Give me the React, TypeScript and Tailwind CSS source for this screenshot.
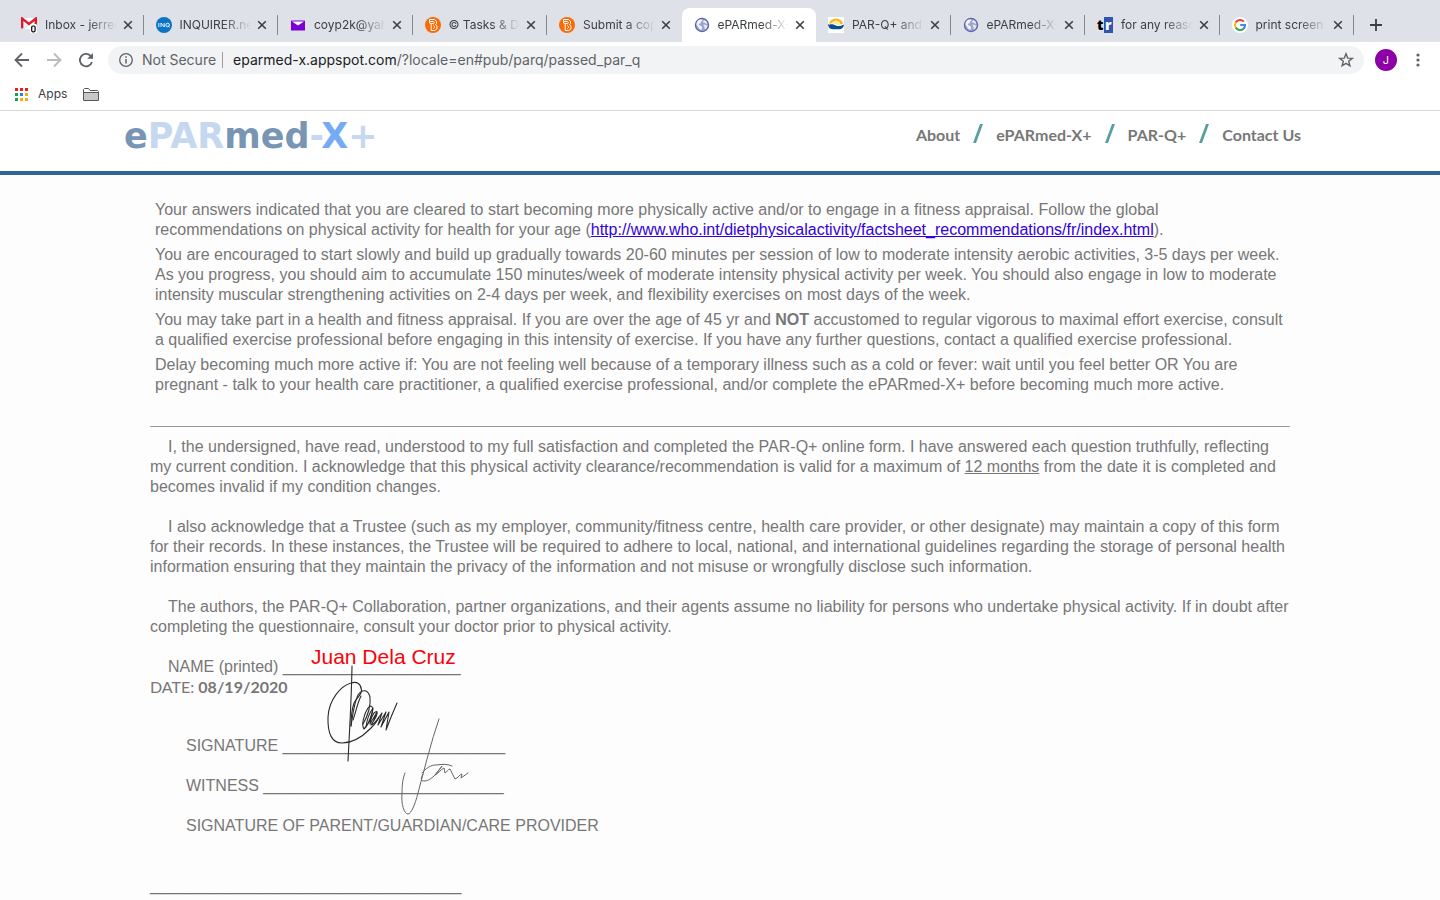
import React from "react";

function Gmail() {
  return (
    <svg viewBox="0 0 16 16" className="size-4 shrink-0" aria-hidden="true">
      <path d="M0 1h16v11H0z" fill="#fff" />
      <path d="M3 11.500l5-4.500 5 4.500" fill="none" stroke="#ccc" strokeWidth="1" />
      <path d="M1.200 11.500V1.600L8 7l6.800-5.400v9.900" fill="none" stroke="#e2192c" strokeWidth="2.400" />
      <rect x="9" y="7" width="7" height="9" rx="1.500" fill="#fff" />
      <rect x="10.700" y="9" width="3.400" height="5.800" rx="1.200" fill="#fff" stroke="#000" strokeWidth="1.200" />
    </svg>
  );
}

function Inquirer() {
  return (
    <svg viewBox="0 0 16 16" className="size-4 shrink-0" aria-hidden="true">
      <circle cx="8" cy="8" r="8" fill="#0b74c4" />
      <path d="M2.800 6v4M5 10V6l3.200 4V6" fill="none" stroke="#fff" strokeWidth="0.900" />
      <circle cx="11.600" cy="8" r="1.800" fill="none" stroke="#fff" strokeWidth="0.900" />
      <path d="M11.800 8.500l1.700 1.700" stroke="#fff" strokeWidth="0.900" />
    </svg>
  );
}

function Yahoo() {
  return (
    <svg viewBox="0 0 16 16" className="size-4 shrink-0" aria-hidden="true">
      <rect x="1" y="3.500" width="14" height="10" rx="0.500" fill="#7b00d4" />
      <path d="M2 4.500h12L8 8.500z" fill="#fff" />
    </svg>
  );
}

function Brainly() {
  return (
    <svg viewBox="0 0 16 16" className="size-4 shrink-0" aria-hidden="true">
      <circle cx="8" cy="8" r="8" fill="#f96b07" />
      <path
        d="M4.500 2.500h5l2 1.700v2.300l-1 1.300 1.500 1.400v2.600l-2.200 1.700H6.200V6.500h2.300M4.500 2.500v2h4l.7.700v1l-.900.800M8.200 8.500l1.300 1v1.200l-.8.800H8.200M4.500 4.500v1.500l1.700.5"
        fill="none"
        stroke="#fff"
        strokeWidth="1"
      />
    </svg>
  );
}

function Globe() {
  return (
    <svg viewBox="0 0 16 16" className="size-4 shrink-0" aria-hidden="true">
      <circle cx="8" cy="8" r="6.600" fill="#9aa5cf" stroke="#5d60aa" strokeWidth="1.200" />
      <path d="M3 5l1.500-2 2.700-.700 1.300 1.200-1.800 1.200.200 1.500-1.700.300-.4 1.500 2.500 1 .900 1.600-.900 2.400-2.300-1.500-1.200-2.300-1.300-1.700z" fill="#f2f5fc" />
      <path d="M10 3.200l2.200 1 1 2.300-1.200.3-1-1.300-1.400.3-.500-1.300z" fill="#f2f5fc" />
      <path d="M9.500 7.500l2.200.2 1.900 1-.800 2.200-1.600 1.700-.900-2.300z" fill="#dfe5f5" />
    </svg>
  );
}

function Sunrise() {
  return (
    <svg viewBox="0 0 16 16" className="size-4 shrink-0" aria-hidden="true">
      <rect width="16" height="16" fill="#fff" />
      <path d="M1 7.500a7 6 0 0 1 14 0z" fill="#fbb414" />
      <path d="M3.500 7.500a4.500 4 0 0 1 9 0z" fill="#fde9a0" />
      <path d="M0 7.500c3-1.400 5-.600 8 .900 3 1 5 .500 8-.900-.300 3-2 4.800-5 4.800H5C2 12.300.3 10.500 0 7.500z" fill="#07508e" />
      <path d="M1 7.300c2.500-1.200 4.500-.500 7 .500 2.500.8 4.500.600 7-.500" fill="none" stroke="#fff" strokeWidth="1" />
    </svg>
  );
}

function Tr() {
  return (
    <span aria-hidden="true" className="flex h-4 w-4 shrink-0 items-center font-['Open_Sans',sans-serif] text-sm leading-4 font-extrabold">
      <span className="w-[7px] text-black">t</span>
      <span className="h-4 w-[9px] bg-[#2f55b0] pl-px text-white">r</span>
    </span>
  );
}

function Google() {
  return (
    <svg viewBox="0 0 16 16" className="size-4 shrink-0" aria-hidden="true">
      <circle cx="8" cy="8" r="8" fill="#fff" />
      <g fill="none" strokeWidth="2.100">
        <path d="M11.800 4.600A5 5 0 0 0 3.700 5.600" stroke="#ea4335" />
        <path d="M3.700 5.500a5 5 0 0 0 0 5" stroke="#fbbc05" />
        <path d="M3.700 10.400a5 5 0 0 0 7.800 1.300" stroke="#34a853" />
        <path d="M11.300 11.900A5 5 0 0 0 13 8H8.200" stroke="#4285f4" />
      </g>
    </svg>
  );
}

function Close() {
  return (
    <svg viewBox="0 0 10 10" className="size-[10px]" aria-hidden="true">
      <path d="M1.200 1.200l7.600 7.600M8.800 1.200L1.200 8.800" stroke="#3c4043" strokeWidth="1.600" />
    </svg>
  );
}

type TabInfo = { title: string; icon: () => React.JSX.Element; active?: boolean; divider?: boolean };

const tabs: TabInfo[] = [
  { title: "Inbox - jerreco", icon: Gmail, divider: true },
  { title: "INQUIRER.net", icon: Inquirer, divider: true },
  { title: "coyp2k@yahoo", icon: Yahoo, divider: true },
  { title: "© Tasks & Do", icon: Brainly, divider: true },
  { title: "Submit a copy", icon: Brainly },
  { title: "ePARmed-X+", icon: Globe, active: true },
  { title: "PAR-Q+ and", icon: Sunrise, divider: true },
  { title: "ePARmed-X+", icon: Globe, divider: true },
  { title: "for any reaso", icon: Tr, divider: true },
  { title: "print screen o", icon: Google, divider: true },
];

function Tab({ title, icon: Icon, active, divider }: TabInfo) {
  return (
    <div className={active ? "relative flex min-w-0 flex-1 items-center rounded-t-lg bg-white pr-[11px] pl-3" : "relative flex min-w-0 flex-1 items-center pr-[11px] pl-3"}>
      <button type="button" className="flex min-w-0 flex-1 items-center gap-2 text-left">
        <Icon />
        <span className="block min-w-0 flex-1 overflow-hidden text-xs leading-4 whitespace-nowrap text-[#3c4043] [mask-image:linear-gradient(to_right,#000_60%,transparent)]">
          {title}
        </span>
      </button>
      <button type="button" aria-label={"Close " + title} className="ml-[6px] shrink-0">
        <Close />
      </button>
      {divider && <span className="absolute top-[7px] right-0 h-5 w-px bg-[#85888d]" />}
    </div>
  );
}

function BrowserChrome() {
  return (
    <header className="border-b border-[#d9dadc] bg-white font-[Inter,sans-serif]">
      <div className="flex bg-[#dee1e7] pt-2 pl-[9px]">
        <div className="flex h-[34px] min-w-0 flex-1">
          {tabs.map((t, i) => (
            <Tab key={i} {...t} />
          ))}
        </div>
        <div className="flex w-[86px] items-center pl-[15px]">
          <button type="button" aria-label="New tab">
            <svg viewBox="0 0 14 14" className="size-[14px]" aria-hidden="true">
              <path d="M7 1v12M1 7h12" stroke="#3c4043" strokeWidth="1.800" />
            </svg>
          </button>
        </div>
      </div>
      <div className="flex h-9 items-center pr-[14px] pl-3">
        <div className="flex w-24 items-center gap-3">
          <button type="button" aria-label="Back">
            <svg viewBox="0 0 20 20" className="size-5" fill="none" stroke="#5f6368" strokeWidth="1.800" aria-hidden="true">
              <path d="M17 10H4M10 3.500L3.500 10l6.500 6.500" />
            </svg>
          </button>
          <button type="button" aria-label="Forward">
            <svg viewBox="0 0 20 20" className="size-5" fill="none" stroke="#babcbe" strokeWidth="1.800" aria-hidden="true">
              <path d="M3 10h13M10 3.500l6.500 6.500-6.500 6.500" />
            </svg>
          </button>
          <button type="button" aria-label="Reload">
            <svg viewBox="0 0 20 20" className="size-5" fill="none" stroke="#5f6368" strokeWidth="1.800" aria-hidden="true">
              <path d="M16 12A6.200 6.200 0 1 1 14.600 5.800L16 7.200" />
              <path d="M17 3v5.800h-5.800z" fill="#5f6368" stroke="none" />
            </svg>
          </button>
        </div>
        <div className="flex h-7 min-w-0 flex-1 items-center rounded-full bg-[#f1f3f4] px-[10px] text-sm text-[#5f6368]">
          <svg viewBox="0 0 16 16" className="size-4 shrink-0" aria-hidden="true">
            <circle cx="8" cy="8" r="6.300" fill="none" stroke="#5f6368" strokeWidth="1.300" />
            <path d="M8 7v4.500M8 4.300v1.500" stroke="#5f6368" strokeWidth="1.500" />
          </svg>
          <span className="ml-2 shrink-0">Not Secure</span>
          <span className="mr-[10px] ml-[6px] h-4 w-px bg-[#9b9ea2]" />
          <span className="flex-1 whitespace-nowrap">
            <span className="text-[#202124]">eparmed-x.appspot.com</span>/?locale=en#pub/parq/passed_par_q
          </span>
          <button type="button" aria-label="Bookmark this page">
            <svg viewBox="0 0 16 16" className="size-4" fill="none" stroke="#5f6368" strokeWidth="1.400" aria-hidden="true">
              <path d="M8 1.800l1.700 4.300 4.600.3-3.600 2.900 1.200 4.500L8 11.300l-3.900 2.500 1.200-4.500L1.700 6.400l4.600-.300z" />
            </svg>
          </button>
        </div>
        <button type="button" aria-label="Profile" className="ml-[11px] flex size-[22px] items-center justify-center rounded-full bg-[#8c00a5] text-[11px] text-white">
          J
        </button>
        <button type="button" aria-label="Menu" className="ml-[13px]">
          <svg viewBox="0 0 16 16" className="size-4" fill="#5f6368" aria-hidden="true">
            <circle cx="8" cy="3" r="1.600" />
            <circle cx="8" cy="8" r="1.600" />
            <circle cx="8" cy="13" r="1.600" />
          </svg>
        </button>
      </div>
      <div className="flex h-8 items-center gap-4 pl-[15px] text-xs text-[#3c4043]">
        <button type="button" className="flex items-center gap-[10px]">
          <svg viewBox="0 0 13 13" className="size-[13px]" aria-hidden="true">
            <path d="M0 0h3v3H0zM5 0h3v3H5zM10 0h3v3h-3z" fill="#ee1c1c" />
            <path d="M0 5h3v3H0zM0 10h3v3H0z" fill="#14a54b" />
            <path d="M5 5h3v3H5z" fill="#1a83f5" />
            <path d="M10 5h3v3h-3zM5 10h3v3H5zM10 10h3v3h-3z" fill="#fbab0c" />
          </svg>
          Apps
        </button>
        <button type="button" aria-label="Bookmark folder">
          <svg viewBox="0 0 16 13" className="h-[13px] w-4" aria-hidden="true">
            <path d="M.5 11.500v-10l1-1h4l1.500 2h7.500l1 1v8l-1 1h-13z" fill="#fff" stroke="#55585c" />
            <path d="M1 4.500h14v7.500H1z" fill="#c8c8c8" />
            <path d="M.5 4.500h15M.5 4v8.500h15V4" fill="none" stroke="#55585c" />
          </svg>
        </button>
      </div>
    </header>
  );
}

const links = ["About", "ePARmed-X+", "PAR-Q+", "Contact Us"];

function SiteHeader() {
  return (
    <div className="flex h-16 items-start justify-between border-b-4 border-[#2f6794] bg-white pr-[139px] pl-[124px]">
      <a href="#home" className="mt-[7px] font-['DejaVu_Sans',sans-serif] text-[35px] leading-9 font-bold text-[#c5d8f0]">
        <span className="text-[#7895b4]">e</span>PAR<span className="text-[#7895b4]">med</span>-<span className="text-[#75abf6]">X</span>+
      </a>
      <nav className="mt-3 flex items-center font-[Lato,sans-serif] text-base leading-6 font-bold text-[#777]">
        {links.map((l, i) => (
          <React.Fragment key={l}>
            {i > 0 && (
              <svg viewBox="0 0 10 19" className="mr-[13px] mb-1 ml-[13px] h-[19px] w-[10px]" aria-hidden="true">
                <path d="M0 19L7 0h3L3 19z" fill="#5b9ea0" />
              </svg>
            )}
            <a href={"#" + l}>{l}</a>
          </React.Fragment>
        ))}
      </nav>
    </div>
  );
}

function Signatures() {
  return (
    <svg viewBox="0 0 150 160" className="pointer-events-none absolute top-0 left-[170px] h-[160px] w-[150px]" fill="none" strokeLinecap="round" strokeLinejoin="round" aria-hidden="true">
      <g stroke="#2a2a2a" strokeWidth="1.100">
        <path d="M32 9C31.500 42 29.500 74 28 104" />
        <path d="M31 69c0-10 1-17 3-23 3-6 8-8 7.500-13C41 27 37 24 31 26 21 29 9 42 8 60c-.5 17 4 26 14 26 10 0 20-6 28-14 5-5 8-9 9-12" />
        <path d="M31 69c2-13 3-23 7-31 4-6 10-6 12 2 1 8-2 19-7 27" />
        <path d="M33 63c3-8 4-16 8-24" />
        <path d="M44 72c-3-4 0-15 4-21 3-4 6-1 4 5-2 7-5 13-8 16 4-3 7-11 10-16 3-3 4-1 2 4l-5 8c4-1 7-7 11-12l-4 12 8-13-5 15 8-15-3 18c3-8 7-18 11-27" />
        <path d="M46 70c1-8 4-15 7-19l-3 16 7-12-3 8" />
      </g>
      <g stroke="#666" strokeWidth="1">
        <path d="M119 62C111 85 105 110 98 136c-3 12-7 21-10 21-4 0-7-10-6-21 0-9 1-15 3-20" />
        <path d="M102 116c4-5 9-8 14-8 7-1 12-1 16 1" />
        <path d="M103 117c-2 4-3 7 1 7 6 0 12-6 18-15l-7 9c3-1 5-5 9-7l1 5c2-1 3-4 5-4l5 10c3-1 5-5 7-5l-1 4 7-5" />
      </g>
    </svg>
  );
}

function Intro() {
  return (
    <section className="flex flex-col gap-[5px] px-[5px]">
      <p>
        Your answers indicated that you are cleared to start becoming more physically active and/or to engage in a fitness appraisal. Follow the global recommendations on physical activity for health for your age (
        <a href="http://www.who.int/dietphysicalactivity/factsheet_recommendations/fr/index.html" className="text-[#3300dd] underline">
          http://www.who.int/dietphysicalactivity/factsheet_recommendations/fr/index.html
        </a>
        ).
      </p>
      <p>
        You are encouraged to start slowly and build up gradually towards 20-60 minutes per session of low to moderate intensity aerobic activities, 3-5 days per week. As you progress, you should aim to accumulate 150 minutes/week of moderate intensity physical activity per week. You should also engage in low to moderate intensity muscular strengthening activities on 2-4 days per week, and flexibility exercises on most days of the week.
      </p>
      <p>
        You may take part in a health and fitness appraisal. If you are over the age of 45 yr and <b>NOT</b> accustomed to regular vigorous to maximal effort exercise, consult a qualified exercise professional before engaging in this intensity of exercise. If you have any further questions, contact a qualified exercise professional.
      </p>
      <p>
        Delay becoming much more active if: You are not feeling well because of a temporary illness such as a cold or fever: wait until you feel better OR You are pregnant - talk to your health care practitioner, a qualified exercise professional, and/or complete the ePARmed-X+ before becoming much more active.
      </p>
    </section>
  );
}

function Declaration() {
  return (
    <section className="flex flex-col gap-5">
      <p className="indent-[18px]">
        I, the undersigned, have read, understood to my full satisfaction and completed the PAR-Q+ online form. I have answered each question truthfully, reflecting my current condition. I acknowledge that this physical activity clearance/recommendation is valid for a maximum of <u>12 months</u> from the date it is completed and becomes invalid if my condition changes.
      </p>
      <p className="indent-[18px]">
        I also acknowledge that a Trustee (such as my employer, community/fitness centre, health care provider, or other designate) may maintain a copy of this form for their records. In these instances, the Trustee will be required to adhere to local, national, and international guidelines regarding the storage of personal health information ensuring that they maintain the privacy of the information and not misuse or wrongfully disclose such information.
      </p>
      <p className="indent-[18px]">
        The authors, the PAR-Q+ Collaboration, partner organizations, and their agents assume no liability for persons who undertake physical activity. If in doubt after completing the questionnaire, consult your doctor prior to physical activity.
      </p>
      <div className="relative flex flex-col gap-5">
        <div>
          <p className="pl-[18px]">NAME (printed) ____________________</p>
          <p className="font-[Lato,sans-serif]">
            DATE: <b>08/19/2020</b>
          </p>
        </div>
        <div className="mt-[19px] flex flex-col gap-5 pl-9">
          <p>SIGNATURE _________________________</p>
          <p>WITNESS ___________________________</p>
          <p>SIGNATURE OF PARENT/GUARDIAN/CARE PROVIDER</p>
        </div>
        <p className="mt-5">___________________________________</p>
        <span className="absolute -top-3 left-[161px] text-[21px] leading-6 whitespace-nowrap text-[#fb0007]">Juan Dela Cruz</span>
        <Signatures />
      </div>
    </section>
  );
}

export default function App() {
  return (
    <div className="min-h-screen bg-[#fdfdfd]">
      <BrowserChrome />
      <SiteHeader />
      <main className="px-[150px] pt-[25px] font-['Liberation_Sans',Arial,sans-serif] text-base leading-5 text-[#777]">
        <Intro />
        <hr className="mt-[31px] mb-[10px] border-[#999]" />
        <Declaration />
      </main>
    </div>
  );
}
